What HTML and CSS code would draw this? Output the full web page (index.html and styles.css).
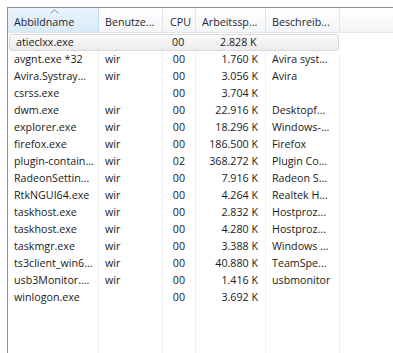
FILE: index.html
```
<!DOCTYPE html>
<html lang="de">
<head>
  <meta charset="UTF-8" />
  <title>Prozesse</title>
  <link rel="stylesheet" href="styles.css">
</head>
<body>
  <div class="listview">
    <!-- Spaltenkopf -->
    <div class="header">
      <div class="hcell col-name sorted">
        <svg class="sort-arrow" width="9" height="5" viewBox="0 0 9 5"><path d="M0.5 4.5 L4.5 0.8 L8.5 4.5" fill="none" stroke="#8393a8" stroke-width="1"/></svg>
        Abbildname
      </div>
      <div class="hcell col-user">Benutze...</div>
      <div class="hcell col-cpu">CPU</div>
      <div class="hcell col-mem">Arbeitssp...</div>
      <div class="hcell col-desc">Beschreib...</div>
      <div class="hcell col-rest"></div>
    </div>

    <!-- Prozessliste -->
    <div class="rows">
      <div class="row selected">
        <div class="cell col-name">atieclxx.exe</div>
        <div class="cell col-user"></div>
        <div class="cell col-cpu">00</div>
        <div class="cell col-mem">2.828 K</div>
        <div class="cell col-desc"></div>
      </div>
      <div class="row">
        <div class="cell col-name">avgnt.exe *32</div>
        <div class="cell col-user">wir</div>
        <div class="cell col-cpu">00</div>
        <div class="cell col-mem">1.760 K</div>
        <div class="cell col-desc">Avira syst...</div>
      </div>
      <div class="row">
        <div class="cell col-name">Avira.Systray...</div>
        <div class="cell col-user">wir</div>
        <div class="cell col-cpu">00</div>
        <div class="cell col-mem">3.056 K</div>
        <div class="cell col-desc">Avira</div>
      </div>
      <div class="row">
        <div class="cell col-name">csrss.exe</div>
        <div class="cell col-user"></div>
        <div class="cell col-cpu">00</div>
        <div class="cell col-mem">3.704 K</div>
        <div class="cell col-desc"></div>
      </div>
      <div class="row">
        <div class="cell col-name">dwm.exe</div>
        <div class="cell col-user">wir</div>
        <div class="cell col-cpu">00</div>
        <div class="cell col-mem">22.916 K</div>
        <div class="cell col-desc">Desktopf...</div>
      </div>
      <div class="row">
        <div class="cell col-name">explorer.exe</div>
        <div class="cell col-user">wir</div>
        <div class="cell col-cpu">00</div>
        <div class="cell col-mem">18.296 K</div>
        <div class="cell col-desc">Windows-...</div>
      </div>
      <div class="row">
        <div class="cell col-name">firefox.exe</div>
        <div class="cell col-user">wir</div>
        <div class="cell col-cpu">00</div>
        <div class="cell col-mem">186.500 K</div>
        <div class="cell col-desc">Firefox</div>
      </div>
      <div class="row">
        <div class="cell col-name">plugin-contain...</div>
        <div class="cell col-user">wir</div>
        <div class="cell col-cpu">02</div>
        <div class="cell col-mem">368.272 K</div>
        <div class="cell col-desc">Plugin Co...</div>
      </div>
      <div class="row">
        <div class="cell col-name">RadeonSettin...</div>
        <div class="cell col-user">wir</div>
        <div class="cell col-cpu">00</div>
        <div class="cell col-mem">7.916 K</div>
        <div class="cell col-desc">Radeon S...</div>
      </div>
      <div class="row">
        <div class="cell col-name">RtkNGUI64.exe</div>
        <div class="cell col-user">wir</div>
        <div class="cell col-cpu">00</div>
        <div class="cell col-mem">4.264 K</div>
        <div class="cell col-desc">Realtek H...</div>
      </div>
      <div class="row">
        <div class="cell col-name">taskhost.exe</div>
        <div class="cell col-user">wir</div>
        <div class="cell col-cpu">00</div>
        <div class="cell col-mem">2.832 K</div>
        <div class="cell col-desc">Hostproz...</div>
      </div>
      <div class="row">
        <div class="cell col-name">taskhost.exe</div>
        <div class="cell col-user">wir</div>
        <div class="cell col-cpu">00</div>
        <div class="cell col-mem">4.280 K</div>
        <div class="cell col-desc">Hostproz...</div>
      </div>
      <div class="row">
        <div class="cell col-name">taskmgr.exe</div>
        <div class="cell col-user">wir</div>
        <div class="cell col-cpu">00</div>
        <div class="cell col-mem">3.388 K</div>
        <div class="cell col-desc">Windows ...</div>
      </div>
      <div class="row">
        <div class="cell col-name">ts3client_win6...</div>
        <div class="cell col-user">wir</div>
        <div class="cell col-cpu">00</div>
        <div class="cell col-mem">40.880 K</div>
        <div class="cell col-desc">TeamSpe...</div>
      </div>
      <div class="row">
        <div class="cell col-name">usb3Monitor....</div>
        <div class="cell col-user">wir</div>
        <div class="cell col-cpu">00</div>
        <div class="cell col-mem">1.416 K</div>
        <div class="cell col-desc">usbmonitor</div>
      </div>
      <div class="row">
        <div class="cell col-name">winlogon.exe</div>
        <div class="cell col-user"></div>
        <div class="cell col-cpu">00</div>
        <div class="cell col-mem">3.692 K</div>
        <div class="cell col-desc"></div>
      </div>
      <!-- leerer Bereich mit Spaltenlinien -->
      <div class="row filler">
        <div class="cell col-name"></div>
        <div class="cell col-user"></div>
        <div class="cell col-cpu"></div>
        <div class="cell col-mem"></div>
        <div class="cell col-desc"></div>
      </div>
    </div>
  </div>
</body>
</html>
```

FILE: styles.css
```
body {
  margin: 0;
  background-color: #ffffff;
  font-family: 'Open Sans', 'DejaVu Sans', sans-serif;
  font-size: 10.7px;
  color: #1a1a1a;
}

/* ganze Liste */
.listview {
  margin: 7px 0 0 7px;
  height: calc(100vh - 7px);
  border-top: 1px solid #8a8e96;
  border-left: 1px solid #8a8e96;
  display: flex;
  flex-direction: column;
  overflow: hidden;
}

/* Spaltenbreiten */
.col-name { width: 91px; }
.col-user { width: 64px; }
.col-cpu { width: 33px; }
.col-mem { width: 70px; }
.col-desc { width: 74px; }
.col-rest { flex: 1; }

/* Kopfzeile */
.header {
  display: flex;
  height: 24px;
  border-bottom: 1px solid #e3e6ea;
  background: linear-gradient(#ffffff, #f4f5f7);
}

.hcell {
  position: relative;
  box-sizing: border-box;
  display: flex;
  align-items: center;
  padding-left: 6px;
  padding-top: 3px;
  border-right: 1px solid #e1e4e8;
  color: #1e2632;
}

.hcell.col-cpu { padding-left: 7px; }
.hcell.col-rest { border-right: none; }

.hcell.sorted {
  background: linear-gradient(#e9f4fc, #d9ebf8);
  border-right-color: #c8dcec;
}

.sort-arrow {
  position: absolute;
  top: 1px;
  left: 42px;
}

/* Zeilen */
.rows {
  flex: 1;
  display: flex;
  flex-direction: column;
  padding-top: 1px;
}

.row {
  display: flex;
  height: 17px;
  flex-shrink: 0;
}

.cell {
  box-sizing: border-box;
  border-right: 1px solid #eef0f2;
  padding-left: 6px;
  line-height: 16px;
  white-space: nowrap;
  overflow: hidden;
}

.cell.col-cpu,
.cell.col-mem {
  text-align: right;
  padding-left: 0;
}

.cell.col-cpu { padding-right: 10px; }
.cell.col-mem { padding-right: 7px; }

.row.filler {
  flex: 1;
}

/* markierte Zeile */
.row.selected {
  width: 330px;
  margin-left: 1px;
  border: 1px solid #d9d9d9;
  border-radius: 3px;
  background: linear-gradient(#fafafa, #ececec);
  box-sizing: border-box;
  height: 17px;
}

.row.selected .cell {
  border-right-color: transparent;
  line-height: 14px;
}

.row.selected .col-name { width: 90px; }
```
